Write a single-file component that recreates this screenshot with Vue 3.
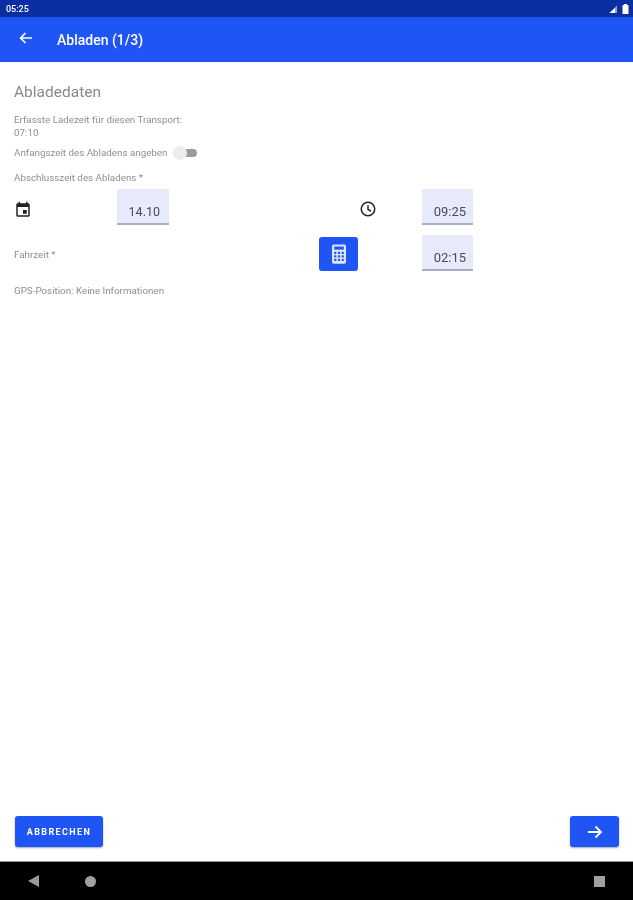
<script setup>
const rows = [
  { id: 'end', date: '14.10', time: '09:25' },
  { id: 'drive', time: '02:15' }
]
</script>

<template>
  <div class="page">
    <header class="status">
      <span class="clock-text">05:25</span>
      <span class="status-icons">
        <svg width="10" height="10" viewBox="0 0 10 10"><path d="M9 1.5V9H1.5z" fill="#fff" opacity=".55"/><path d="M7 4v5H1.5z" fill="#fff"/></svg>
        <svg width="7" height="10" viewBox="0 0 7 10"><path d="M2 0h3v1h1.5v9h-6V1H2z" fill="#fff"/></svg>
      </span>
    </header>
    <div class="appbar">
      <svg class="back" width="16" height="16" viewBox="0 0 16 16"><path d="M14 8H3M7.500 3 2.600 8l4.900 5" fill="none" stroke="#fff" stroke-width="1.700"/></svg>
      <h1>Abladen (1/3)</h1>
    </div>
    <main class="content">
      <h2>Abladedaten</h2>
      <p class="small info">Erfasste Ladezeit für diesen Transport:<br>07:10</p>
      <div class="switch-row">
        <span class="small">Anfangszeit des Abladens angeben</span>
        <span class="switch"><span class="track"></span><span class="thumb"></span></span>
      </div>
      <p class="small end-label">Abschlusszeit des Abladens *</p>
      <div class="grid">
        <svg class="cal" width="18" height="18" viewBox="0 0 24 24"><path fill="#222" d="M19 3h-1V1h-2v2H8V1H6v2H5C3.900 3 3 3.900 3 5v14c0 1.100.9 2 2 2h14c1.100 0 2-.9 2-2V5c0-1.100-.9-2-2-2zm0 16H5V8h14v11zM12 12h5v5h-5z"/></svg>
        <div class="field date">{{ rows[0].date }}</div>
        <span></span>
        <svg class="clock" width="18" height="18" viewBox="0 0 24 24"><path fill="none" stroke="#222" stroke-width="2" d="M12 3a9 9 0 1 0 0 18 9 9 0 0 0 0-18zM12 7v5.500l4 2.500"/></svg>
        <div class="field">{{ rows[0].time }}</div>

        <span class="small drive">Fahrzeit *</span>
        <span></span>
        <span></span>
        <button class="calc" aria-label="Rechner">
          <svg width="14" height="20" viewBox="0 0 16 22"><rect width="16" height="22" rx="2" fill="#dfe6fb"/><rect x="2.500" y="2.500" width="11" height="3.500" fill="#1f55f5"/><g fill="#1f55f5"><rect x="2.500" y="8.500" width="2.500" height="2.500"/><rect x="6.750" y="8.500" width="2.500" height="2.500"/><rect x="11" y="8.500" width="2.500" height="2.500"/><rect x="2.500" y="12.500" width="2.500" height="2.500"/><rect x="6.750" y="12.500" width="2.500" height="2.500"/><rect x="11" y="12.500" width="2.500" height="2.500"/><rect x="2.500" y="16.500" width="2.500" height="2.500"/><rect x="6.750" y="16.500" width="2.500" height="2.500"/><rect x="11" y="16.500" width="2.500" height="2.500"/></g></svg>
        </button>
        <div class="field">{{ rows[1].time }}</div>
      </div>
      <p class="small gps">GPS-Position: Keine Informationen</p>
    </main>
    <footer class="actions">
      <button class="btn cancel">ABBRECHEN</button>
      <button class="btn next" aria-label="Weiter">
        <svg width="16" height="16" viewBox="0 0 16 16"><path d="M1 8h13M8.500 2.500 14 8l-5.500 5.500" fill="none" stroke="#fff" stroke-width="1.800"/></svg>
      </button>
    </footer>
    <nav class="navbar">
      <span class="tri"></span>
      <span class="dot"></span>
      <span class="square"></span>
    </nav>
  </div>
</template>

<style>
body { margin: 0; background: #fff; }
</style>

<style scoped>
.page {
  width: 633px; height: 900px; display: flex; flex-direction: column;
  font-family: Roboto, "Noto Sans", sans-serif; background: #fff; overflow: hidden;
  filter: blur(0.6px);
}
.status {
  height: 17px; flex: none; background: #0b2ea3; color: #fff; display: flex;
  align-items: center; justify-content: space-between; padding: 0 4px 0 6px;
  font-size: 9px; font-weight: 500;
}
.status-icons { display: flex; gap: 4px; align-items: center; }
.appbar {
  height: 45px; flex: none; background: #1f55f5; display: flex; align-items: center;
  padding-left: 18px; box-sizing: border-box;
}
.back { margin-right: 23px; margin-top: -3px; }
h1 { margin: 0; color: #fff; font-size: 14px; font-weight: 500; }
.content { flex: 1; padding: 0 14px; color: #8c8c8c; }
h2 { margin: 21px 0 0; font-size: 15.500px; line-height: 18px; font-weight: 400; color: #8a8a8a; }
.small { font-size: 9.800px; line-height: 13px; color: #8f8f8f; margin: 0; }
.info { margin-top: 11.500px; }
.switch-row { display: flex; align-items: center; height: 16px; margin-top: 6px; }
.switch { position: relative; width: 24px; height: 14px; margin-left: 6px; }
.track { position: absolute; left: 3px; right: 0; top: 3px; height: 8px; border-radius: 4px; background: #9b9b9b; }
.thumb { position: absolute; left: 0; top: 0; width: 14px; height: 14px; border-radius: 50%; background: #ececec; }
.end-label { margin-top: 10px; line-height: 13px; }
.grid {
  display: grid; grid-template-columns: 103px 52px 150px 103px 51px;
  grid-auto-rows: 36px; row-gap: 10px; margin-top: 5px; align-items: center;
}
.field {
  height: 36px; box-sizing: border-box; background: #e6eafa; border-bottom: 2px solid #a9aec0;
  display: flex; align-items: flex-end; justify-content: flex-end; padding: 0 7px 4px 0;
  color: #4a4d57; font-size: 13px; line-height: 14px;
}
.date { padding-right: 9px; font-size: 12.500px; }
.cal { margin-top: 6px; }
.clock { margin-left: 40px; margin-top: 5px; }
.drive { margin-top: 4px; }
.calc {
  width: 39px; height: 34px; margin-top: 2px; border: 0; padding: 0; border-radius: 3px; background: #1f55f5;
  display: flex; align-items: center; justify-content: center;
}
.gps { margin-top: 13px; }
.actions { height: 45px; flex: none; display: flex; justify-content: space-between; align-items: flex-start; padding: 0 14px 0 15px; }
.btn {
  height: 31px; border: 0; border-radius: 3px; background: #1f55f5; color: #fff; padding: 0;
  font-family: inherit; display: flex; align-items: center; justify-content: center;
  box-shadow: 0 1px 2px rgba(0,0,0,.35);
}
.cancel { width: 88px; font-size: 9px; font-weight: 700; letter-spacing: 1.400px; }
.next { width: 49px; }
.navbar { height: 39px; flex: none; background: #000; border-top: 1px solid #999; box-sizing: border-box; position: relative; }
.tri {
  position: absolute; left: 28px; top: 13px; width: 0; height: 0;
  border-top: 6px solid transparent; border-bottom: 6px solid transparent; border-right: 11px solid #9a9a9a;
}
.dot { position: absolute; left: 85px; top: 14px; width: 11px; height: 11px; border-radius: 50%; background: #a0a0a0; }
.square { position: absolute; left: 594px; top: 14px; width: 11px; height: 11px; background: #a0a0a0; }
</style>
